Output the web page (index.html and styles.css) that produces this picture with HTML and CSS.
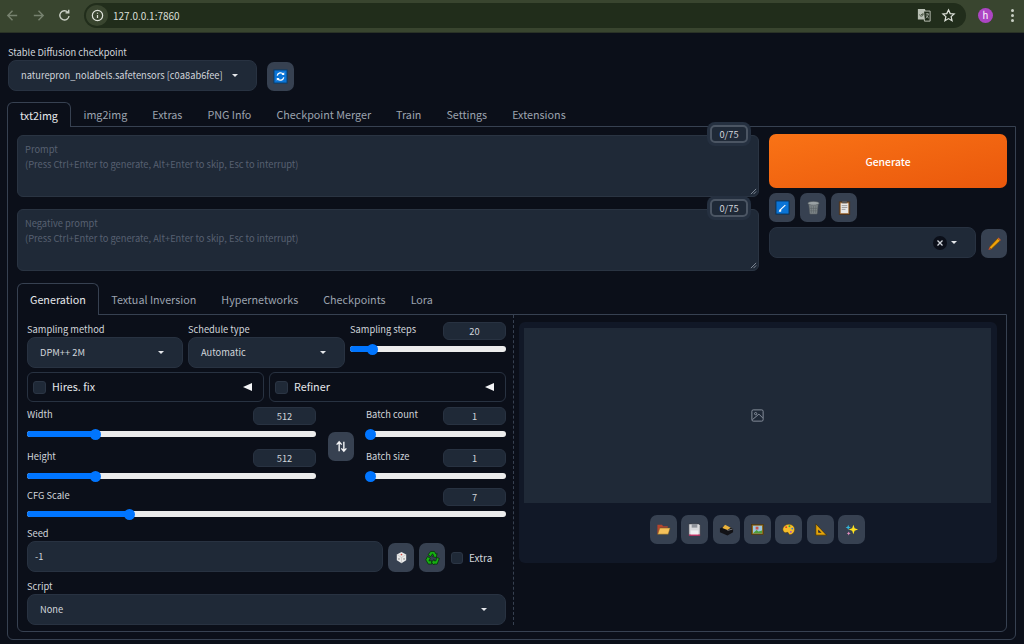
FILE: index.html
```html
<!DOCTYPE html>
<html lang="en">
<head>
    <meta charset="UTF-8">
    <title>Stable Diffusion</title>
    <link rel="stylesheet" href="styles.css">
</head>
<body>
    <header class="chrome">
        <div class="nav">
            <svg class="nav-icon dim" viewBox="0 0 16 16"><path d="M13 8H3.500M8 3 3 8l5 5"/></svg>
            <svg class="nav-icon dim" viewBox="0 0 16 16"><path d="M3 8h9.500M8 3l5 5-5 5"/></svg>
            <svg class="nav-icon" viewBox="0 0 16 16"><path d="M12.800 8.500A4.900 4.900 0 1 1 11.500 4.500M12.500 1.800v3.400H9.100"/></svg>
        </div>
        <div class="omnibox">
            <span class="site-info"><svg viewBox="0 0 16 16"><circle cx="8" cy="8" r="5.500"/><path d="M8 7.500v3.200M8 5v1.200"/></svg></span>
            <span class="url">127.0.0.1:7860</span>
            <svg class="translate" viewBox="0 0 16 16"><path d="M1 1h8l1 3v9H1z" fill="#b9c0b4" stroke="none"/><path d="M7.500 3.500h7.500V15H8.500z" fill="#212d1b" stroke="#c9cfc4"/><path d="M3 7.500a2 2 0 1 0 3.200-1.800M4.500 7.500h2" stroke="#3a4632"/><path d="M10 6.800h3.500M11.700 6v.8M13 6.800c-.4 2-1.500 3.800-3 4.800M10.500 8.500c.6 1.300 1.800 2.500 3 3" stroke="#c9cfc4" stroke-width=".8"/></svg>
            <svg class="star" viewBox="0 0 16 16"><path d="m8 2 1.800 4 4.200.4-3.200 2.800 1 4.300L8 11.300l-3.800 2.200 1-4.300L2 6.400 6.200 6z"/></svg>
        </div>
        <div class="avatar">h</div>
        <div class="kebab"><i></i><i></i><i></i></div>
    </header>

    <main class="page">
        <div class="checkpoint">
            <div class="field">
                <label class="lbl">Stable Diffusion checkpoint</label>
                <div class="select select-ckpt"><span>naturepron_nolabels.safetensors [c0a8ab6fee]</span><i class="caret"></i></div>
            </div>
            <button class="tool tool-refresh">
                <svg viewBox="0 0 16 16"><rect x="1" y="1" width="14" height="14" fill="#0a74d6" stroke="#0b3a66"/><path d="M4.500 7A3.700 3.700 0 0 1 11 5.500M11.500 9A3.700 3.700 0 0 1 5 10.500" fill="none" stroke="#fff" stroke-width="1.400"/><path d="M12 3.500v3H9zM4 12.500v-3h3z" fill="#fff"/></svg>
            </button>
        </div>

        <nav class="tabs tabs-main">
            <a class="tab active">txt2img</a>
            <a class="tab">img2img</a>
            <a class="tab">Extras</a>
            <a class="tab">PNG Info</a>
            <a class="tab">Checkpoint Merger</a>
            <a class="tab">Train</a>
            <a class="tab">Settings</a>
            <a class="tab">Extensions</a>
        </nav>

        <section class="panel">
            <div class="toprow">
                <div class="prompts">
                    <div class="prompt">
                        <span class="token">0/75</span>
                        <p>Prompt<br>(Press Ctrl+Enter to generate, Alt+Enter to skip, Esc to interrupt)</p>
                        <svg class="grip" viewBox="0 0 8 8"><path d="M7 1 1 7M7 4 4 7"/></svg>
                    </div>
                    <div class="prompt">
                        <span class="token">0/75</span>
                        <p>Negative prompt<br>(Press Ctrl+Enter to generate, Alt+Enter to skip, Esc to interrupt)</p>
                        <svg class="grip" viewBox="0 0 8 8"><path d="M7 1 1 7M7 4 4 7"/></svg>
                    </div>
                </div>
                <div class="actions">
                    <button class="generate">Generate</button>
                    <div class="action-tools">
                        <button class="tool">
                            <svg viewBox="0 0 16 16"><rect x="1" y="1" width="14" height="14" fill="#0a74d6" stroke="#0b2f52"/><path d="M5.500 10.500 11 5.500" stroke="#fff" stroke-width="1.300"/><path d="M4 12.500h2.500l.3-2.500-2 .2z" fill="#fff"/></svg>
                        </button>
                        <button class="tool">
                            <svg viewBox="0 0 16 16"><path d="M3 4.500h10l-1.200 10.500H4.200z" fill="#7d8588" stroke="#555c60" stroke-width=".6"/><ellipse cx="8" cy="3.500" rx="6" ry="2" fill="#9aa1a4" stroke="#555c60" stroke-width=".6"/><path d="M5.500 6.500 6 14M8 6.500V14M10.500 6.500 10 14M4 9h8M4.300 11.500h7.400" stroke="#5c6468" stroke-width=".6"/></svg>
                        </button>
                        <button class="tool">
                            <svg viewBox="0 0 16 16"><rect x="2.500" y="2" width="11" height="13.500" fill="#a0703f" stroke="#4b3520"/><rect x="4" y="3.500" width="8" height="10.500" fill="#e8e8e8"/><rect x="5.500" y="1" width="5" height="2.500" fill="#555"/><path d="M5 6h6M5 8h6M5 10h4" stroke="#9a9a9a"/></svg>
                        </button>
                    </div>
                    <div class="styles-row">
                        <div class="select select-styles">
                            <span class="clear"><svg viewBox="0 0 14 14"><path d="m4.500 4.500 5 5M9.500 4.500l-5 5"/></svg></span>
                            <i class="caret"></i>
                        </div>
                        <button class="tool">
                            <svg viewBox="0 0 16 16"><path d="m2.500 12 9-9.500 2.500 2.500-9.500 9z" fill="#f0a30a" stroke="#5b3a00" stroke-width=".7"/><path d="m11.500 2.500.8-.8 2.500 2.500-.8.8z" fill="#d2603c"/><path d="m2.500 12-1 3 3-1z" fill="#c8502a"/></svg>
                        </button>
                    </div>
                </div>
            </div>

            <nav class="tabs tabs-sub">
                <a class="tab active">Generation</a>
                <a class="tab">Textual Inversion</a>
                <a class="tab">Hypernetworks</a>
                <a class="tab">Checkpoints</a>
                <a class="tab">Lora</a>
            </nav>

            <div class="subpanel">
                <div class="settings">
                    <div class="row-sampling">
                        <div class="field">
                            <label class="lbl">Sampling method</label>
                            <div class="select select-mid"><span>DPM++ 2M</span><i class="caret"></i></div>
                        </div>
                        <div class="field">
                            <label class="lbl">Schedule type</label>
                            <div class="select select-mid"><span>Automatic</span><i class="caret"></i></div>
                        </div>
                        <div class="slider-field steps">
                            <div class="slider-head"><label class="lbl">Sampling steps</label><span class="num">20</span></div>
                            <div class="track"><div class="fill" style="width:14.400%"></div></div>
                        </div>
                    </div>

                    <div class="row-accordions">
                        <div class="accordion"><i class="check"></i><span>Hires. fix</span><i class="arrow"></i></div>
                        <div class="accordion"><i class="check"></i><span>Refiner</span><i class="arrow"></i></div>
                    </div>

                    <div class="row-size">
                        <div class="size-col">
                            <div class="slider-field">
                                <div class="slider-head"><label class="lbl">Width</label><span class="num">512</span></div>
                                <div class="track"><div class="fill" style="width:23.400%"></div></div>
                            </div>
                            <div class="slider-field">
                                <div class="slider-head"><label class="lbl">Height</label><span class="num">512</span></div>
                                <div class="track"><div class="fill" style="width:23.400%"></div></div>
                            </div>
                        </div>
                        <button class="tool tool-swap">
                            <svg viewBox="0 0 16 16"><path d="M5.500 13V3.500M2.800 6l2.700-3 2.700 3M10.500 3v9.500M7.800 10l2.700 3 2.700-3"/></svg>
                        </button>
                        <div class="batch-col">
                            <div class="slider-field">
                                <div class="slider-head"><label class="lbl">Batch count</label><span class="num">1</span></div>
                                <div class="track"><div class="fill" style="width:3.200%"></div></div>
                            </div>
                            <div class="slider-field">
                                <div class="slider-head"><label class="lbl">Batch size</label><span class="num">1</span></div>
                                <div class="track"><div class="fill" style="width:3.200%"></div></div>
                            </div>
                        </div>
                    </div>

                    <div class="slider-field cfg">
                        <div class="slider-head"><label class="lbl">CFG Scale</label><span class="num">7</span></div>
                        <div class="track"><div class="fill" style="width:21.300%"></div></div>
                    </div>

                    <div class="seed-row">
                        <div class="field seed-field">
                            <label class="lbl">Seed</label>
                            <div class="select seed-input"><span>-1</span></div>
                        </div>
                        <button class="tool">
                            <svg viewBox="0 0 16 16"><path d="m8 2 5 2.800v6L8 14l-5-3.200v-6z" fill="#e9e9e9"/><path d="M3 4.800 8 8l5-3.200M8 8v6" stroke="#b9b9b9" stroke-width=".6" fill="none"/><circle cx="8" cy="4.800" r=".9" fill="#d2473f"/><circle cx="5.300" cy="9.500" r=".7" fill="#555"/><circle cx="10.700" cy="9.500" r=".7" fill="#555"/></svg>
                        </button>
                        <button class="tool tool-recycle">
                            <svg viewBox="0 0 16 16"><path d="M6 1.500h4l1.800 3 1.200-.7-1 4.200-4-1 1.200-.7L8 4 6.300 7 3.200 5.200zM2.700 7l3 1.800-1.500 2.700h3V15H3.500L.8 10.500zM15.300 9l-2.300 6H9.500v1.200L6.800 13l2.700-3v1.500h2.200L12.300 8z" fill="#17b012" stroke="#06300a" stroke-width=".8"/></svg>
                        </button>
                        <label class="extra"><i class="check"></i><span>Extra</span></label>
                    </div>

                    <div class="field script">
                        <label class="lbl">Script</label>
                        <div class="select select-mid"><span>None</span><i class="caret"></i></div>
                    </div>
                </div>

                <div class="gallery">
                    <div class="preview">
                        <svg viewBox="0 0 16 16"><rect x="2" y="2" width="12" height="12" rx="1.500"/><circle cx="6" cy="6" r="1.200"/><path d="m2.500 12.500 7-6 4 4"/></svg>
                    </div>
                    <div class="gallery-tools">
                        <button class="tool">
                            <svg viewBox="0 0 16 16"><path d="M1.500 3h5l1 1.500h5V6h-8L2.500 13H1.500z" fill="#b5452d"/><path d="M4 6.500h11L13 13H1.800z" fill="#f6c15a" stroke="#7a5a1e" stroke-width=".5"/></svg>
                        </button>
                        <button class="tool">
                            <svg viewBox="0 0 16 16"><path d="M2 2h10.500L14 3.500V14H2z" fill="#d9d9dd" stroke="#33363c" stroke-width=".6"/><rect x="5" y="2" width="6" height="4" fill="#8f939b"/><rect x="4" y="9" width="8" height="5" fill="#f1f1f3"/><path d="M2 14h12" stroke="#d3215f" stroke-width="1.200"/></svg>
                        </button>
                        <button class="tool">
                            <svg viewBox="0 0 16 16"><path d="M1 7 6 4l9 3v4l-6 3.500L1 11z" fill="#121216"/><path d="m3.500 6.500 3-3.500 6 3L9 8.500z" fill="#e9b23c"/><path d="m9 9 5.500-1.500" stroke="#9a9a9a" stroke-width=".8"/></svg>
                        </button>
                        <button class="tool">
                            <svg viewBox="0 0 16 16"><rect x="1.500" y="2.500" width="13" height="11" fill="#8f6a1f" stroke="#3b2c0c" stroke-width=".6"/><rect x="3.200" y="4" width="9.600" height="8" fill="#9cc7dd"/><path d="M3.200 12 7 8.500l2 1.500 3.800-1v3z" fill="#4f9e3a"/><rect x="6" y="5" width="3" height="3" fill="#c9534d"/></svg>
                        </button>
                        <button class="tool">
                            <svg viewBox="0 0 16 16"><path d="M8 2.500c4 0 6.500 2.300 6.500 5.500S12 13.500 9.500 13.500c-1.500 0-1-1.500-2-2.200-1.200-.8-2.500.7-4-.3C1.500 9.500 1.500 6.500 3 5c1.200-1.500 3-2.500 5-2.500z" fill="#f5bd2a" stroke="#5a3e07" stroke-width=".5"/><circle cx="5.500" cy="5.500" r="1" fill="#dd3c2f"/><circle cx="9" cy="4.500" r="1" fill="#35a53a"/><circle cx="12" cy="7" r="1" fill="#2f7bdd"/><circle cx="10.500" cy="10.500" r="1" fill="#a44bc9"/></svg>
                        </button>
                        <button class="tool">
                            <svg viewBox="0 0 16 16"><path d="M3 2v12h11.500z" fill="#e5a50a" stroke="#3d2c04" stroke-width=".7"/><path d="M5.500 8v3.500h3.700z" fill="#2a2a30"/></svg>
                        </button>
                        <button class="tool">
                            <svg viewBox="0 0 16 16"><path d="m10 3 1.300 3.700L15 8l-3.700 1.300L10 13l-1.300-3.700L5 8l3.700-1.300z" fill="#ffe21f"/><path d="m4.500 3 .8 2 2 .8-2 .8-.8 2-.8-2-2-.8 2-.8z" fill="#35b6d8"/><path d="m5 10 .6 1.500 1.500.6-1.500.6L5 14.500l-.6-1.800-1.500-.6 1.500-.6z" fill="#e58fc0"/></svg>
                        </button>
                    </div>
                </div>
            </div>
        </section>
    </main>
</body>
</html>
```

FILE: styles.css
```css
* { box-sizing: border-box; }
html, body { margin: 0; height: 644px; overflow: hidden; }
body {
    background: #0b0f19;
    color: #d1d5db;
    font-family: "Noto Sans CJK SC", "Noto Sans", sans-serif;
    font-size: 9.300px;
}
button { padding: 0; border: none; font-family: inherit; }

/* browser bar */
.chrome {
    height: 33px;
    display: flex;
    align-items: center;
    background: #39452f;
    border-bottom: 1px solid #2a3226;
    color: #d7dbd3;
}
.nav { display: flex; gap: 11px; width: 84px; padding: 0 0 2px 5px; align-items: center; }
.nav-icon { width: 15px; height: 15px; fill: none; stroke: #c9cfc4; stroke-width: 1.500; }
.nav-icon.dim { stroke: #77826f; }
.omnibox {
    width: 882px;
    height: 25px;
    margin-bottom: 2px;
    border-radius: 13px;
    background: #212d1b;
    display: flex;
    align-items: center;
}
.site-info {
    width: 22px; height: 21px; margin-left: 2px;
    border-radius: 50%;
    background: #39452f;
    display: flex; align-items: center; justify-content: center;
}
.site-info svg { width: 15px; height: 15px; fill: none; stroke: #dfe3db; stroke-width: 1.300; }
.url { margin-left: 5px; flex: 1; font-size: 10px; color: #d9ddd5; }
.translate { width: 14px; height: 14px; margin-right: 10px; fill: none; }
.star { width: 15px; height: 15px; margin-right: 10px; fill: none; stroke: #dfe3db; stroke-width: 1.300; }
.avatar {
    width: 15px; height: 15px; margin-left: 12px; margin-bottom: 2px;
    border-radius: 50%;
    background: #ad45c4;
    color: #fff;
    font-size: 9.500px;
    line-height: 14px;
    text-align: center;
}
.kebab { display: flex; flex-direction: column; gap: 2px; margin: 0 0 2px 18px; }
.kebab i { width: 3px; height: 3px; border-radius: 50%; background: #c9cfc4; }

/* page */
.page { padding: 0 7px; }
.checkpoint { display: flex; align-items: flex-end; gap: 10px; height: 58px; margin-left: 1px; }
.lbl { display: block; font-size: 9.300px; line-height: 12px; color: #d1d5db; white-space: nowrap; }
.field .lbl { margin-bottom: 2px; }

.select {
    display: flex;
    align-items: center;
    background: #1f2937;
    border: 1px solid #283241;
    border-radius: 8px;
    color: #d1d5db;
    padding-left: 12px;
    padding-right: 18px;
}
.select span { flex: 1; white-space: nowrap; padding-bottom: 1px; }
.caret {
    width: 0; height: 0;
    border-left: 3.500px solid transparent;
    border-right: 3.500px solid transparent;
    border-top: 3.500px solid #e5e7eb;
}
.select-ckpt { width: 249px; height: 31px; }
.select-mid { height: 31px; }
.tool {
    width: 26px;
    height: 29px;
    flex: none;
    border-radius: 7px;
    background: #374151;
    display: flex;
    align-items: center;
    justify-content: center;
}
.tool svg { width: 15px; height: 15px; }
.tool-refresh { width: 27px; }

/* tabs */
.tabs { display: flex; font-size: 10.750px; color: #9ca3af; }
.tabs-main { height: 24px; margin-top: 11px; }
.tab {
    height: 100%;
    padding: 0 11.500px;
    display: flex;
    align-items: center;
    border: 1px solid transparent;
    border-bottom: none;
}
.tab.active {
    padding: 0 12px;
    color: #e5e7eb;
    border-color: #374151;
    border-radius: 6px 6px 0 0;
    background: #0b0f19;
    margin-bottom: -1px;
    height: calc(100% + 1px);
    position: relative;
    z-index: 1;
}
.panel {
    height: 514px;
    width: 1009px;
    border: 1px solid #374151;
    border-radius: 0 0 6px 6px;
    padding: 7px 8px 0 9px;
}

.toprow { display: flex; gap: 10px; height: 149px; }
.prompts { width: 742px; display: flex; flex-direction: column; gap: 12px; padding-top: 1px; }
.prompt {
    height: 62px;
    position: relative;
    background: #1f2937;
    border: 1px solid #2a3442;
    border-radius: 6px;
    padding: 6px 7px;
    line-height: 15px;
    color: #576071;
}
.prompt p { margin: 0; }
.token {
    position: absolute;
    top: -11px;
    right: 10px;
    width: 38px;
    height: 18px;
    border: 2px solid #4b5563;
    border-radius: 5px;
    background: #1f2937;
    box-shadow: 0 0 0 3px #253040;
    color: #d1d5db;
    line-height: 14px;
    text-align: center;
}
.grip { position: absolute; right: 1px; bottom: 1px; width: 7px; height: 7px; fill: none; stroke: #8b93a0; stroke-width: 1; }

.actions { width: 238px; }
.generate {
    display: block;
    width: 100%;
    height: 54px;
    border-radius: 7px;
    background: linear-gradient(to bottom right, #f97316, #ea580c);
    color: #fff;
    font-size: 10.400px;
    font-weight: 500;
}
.action-tools { display: flex; gap: 5px; margin-top: 5px; }
.styles-row { display: flex; align-items: flex-end; gap: 5px; margin-top: 5px; }
.select-styles { width: 207px; height: 31px; justify-content: flex-end; gap: 4px; }
.select .clear {
    flex: none;
    width: 14px; height: 14px;
    padding: 0;
    border-radius: 50%;
    background: #0b0f19;
    display: flex;
}
.clear svg { width: 14px; height: 14px; fill: none; stroke: #d1d5db; stroke-width: 1.300; }

.tabs-sub { height: 31px; }
.subpanel {
    height: 318px;
    width: 990px;
    border: 1px solid #374151;
    border-radius: 0 0 6px 6px;
    display: flex;
    padding: 7px 9px 0;
}
.settings { width: 479px; }

.row-sampling { display: grid; grid-template-columns: 156px 157px 156px; gap: 5px; height: 46px; }
.row-sampling .field { padding-top: 1px; }
.slider-head { display: flex; justify-content: space-between; align-items: flex-start; height: 18px; }
.slider-head .lbl { padding-top: 1px; }
.num {
    width: 63px;
    height: 18px;
    background: #1f2937;
    border: 1px solid #283241;
    border-radius: 6px;
    line-height: 16px;
    text-align: center;
}
.track { height: 6px; margin-top: 6px; border-radius: 3px; background: #ececec; }
.fill { height: 6px; position: relative; border-radius: 3px; background: #0075ff; }
.fill::after {
    content: "";
    position: absolute;
    right: -6px;
    top: -2.500px;
    width: 11px;
    height: 11px;
    border-radius: 50%;
    background: #0075ff;
}

.row-accordions { display: grid; grid-template-columns: 237px 237px; gap: 5px; margin-top: 4px; height: 30px; }
.accordion {
    display: flex;
    align-items: center;
    border: 1px solid #283241;
    border-radius: 6px;
    padding: 0 11px 0 5px;
    font-size: 10.750px;
    color: #e5e7eb;
}
.accordion span { flex: 1; margin-left: 6px; padding-bottom: 1px; }
.check { width: 13px; height: 13px; flex: none; border-radius: 3px; background: #1f2937; border: 1px solid #2b3544; }
.arrow {
    width: 0; height: 0;
    border-top: 4.500px solid transparent;
    border-bottom: 4.500px solid transparent;
    border-right: 9px solid #f3f4f6;
}

.row-size { display: flex; margin-top: 5px; height: 81px; }
.size-col { width: 289px; display: flex; flex-direction: column; gap: 12px; }
.batch-col { width: 140px; display: flex; flex-direction: column; gap: 12px; }
.tool-swap { margin: 25px 12px 0; }
.tool-swap svg { fill: none; stroke: #f3f4f6; stroke-width: 1.500; }

.cfg .track { margin-top: 5px; }

.seed-row { display: flex; align-items: flex-end; gap: 5px; margin-top: 10px; }
.seed-field { width: 356px; }
.seed-input { height: 31px; padding-left: 7px; }
.extra { display: flex; align-items: center; gap: 6px; height: 29px; margin-left: 1px; font-size: 10px; }
.extra .check { width: 12px; height: 12px; }
.script { margin-top: 8px; }

.gallery {
    width: 478px;
    height: 241px;
    margin-left: 13px;
    background: #111827;
    border-radius: 6px;
    padding: 6px 6px 6px 5px;
    position: relative;
}
.gallery::before {
    content: "";
    position: absolute;
    left: -6px;
    top: -7px;
    height: 310px;
    border-left: 1px dashed #374151;
}
.preview {
    height: 175px;
    background: #1f2937;
    display: flex;
    align-items: center;
    justify-content: center;
}
.preview svg { width: 15px; height: 15px; fill: none; stroke: #8b93a0; stroke-width: 1; }
.gallery-tools { display: flex; justify-content: center; gap: 4.300px; margin-top: 12px; }
.gallery-tools .tool { width: 27px; }
```
